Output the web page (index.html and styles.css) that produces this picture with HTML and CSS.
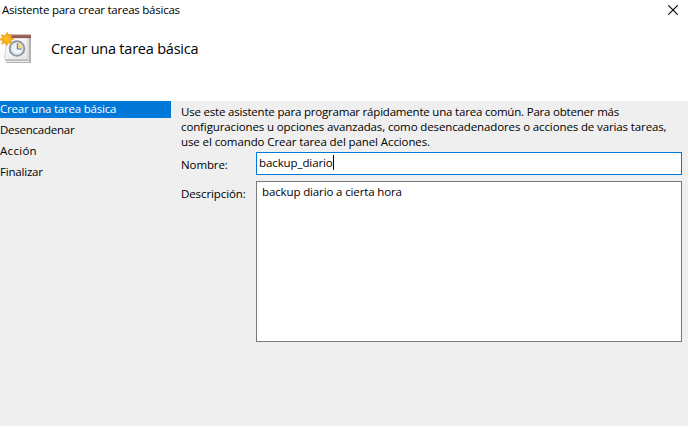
FILE: index.html
```html
<!DOCTYPE html>
<html lang="es">
<head>
<meta charset="utf-8">
<title>Asistente para crear tareas básicas</title>
<link rel="stylesheet" href="styles.css">
</head>
<body>
<div class="wizard">
  <header class="titlebar">
    <span class="caption">Asistente para crear tareas básicas</span>
    <svg class="close" width="10" height="10" viewBox="0 0 10 10"><path d="M0.3 0.3 9.7 9.7M9.7 0.3 0.3 9.7" stroke="#000" stroke-width="1.1"/></svg>
  </header>
  <div class="banner">
    <svg class="icon" width="34" height="34" viewBox="0 0 34 34">
      <defs>
        <linearGradient id="paper" x1="0" y1="0" x2="1" y2="1"><stop offset="0" stop-color="#fff"/><stop offset="1" stop-color="#e4e4e4"/></linearGradient>
        <linearGradient id="binding" x1="0" y1="0" x2="0" y2="1"><stop offset="0" stop-color="#a97767"/><stop offset="1" stop-color="#815348"/></linearGradient>
        <radialGradient id="sun"><stop offset="0" stop-color="#ffc52a"/><stop offset="1" stop-color="#f39a0b"/></radialGradient>
      </defs>
      <path d="M6 3H31V31H6z" fill="#b4b2b1"/>
      <path d="M7 6H29V30H6z" fill="#ededed"/>
      <path d="M6 28.5 4.5 26 7 6H28V28.5z" fill="url(#paper)" stroke="#bcbcbc" stroke-width=".6"/>
      <path d="M5 28H28" stroke="#a3a3a3"/>
      <path d="M7 2.5H31V6H7z" fill="url(#binding)"/>
      <circle cx="17" cy="16.5" r="7.3" fill="#f3f6f8" stroke="#8b989f" stroke-width="1.9"/>
      <circle cx="17" cy="16.5" r="5.7" fill="#eef3f6" stroke="#cbd3d8" stroke-width=".7"/>
      <path d="M17.5 11V16.5H22.5A5.2 5.2 0 0 0 17.5 11z" fill="#f5d487"/>
      <path d="M17.3 11.5V17H21.5" fill="none" stroke="#5e6b73"/>
      <path d="M7.2 0 8.4 3.4 12 2 10.9 5.5 14.3 7 11 8.5 12 12 8.5 10.9 6.9 14 5 11 1.6 12.4 2.6 8.8-1 7.6 2.4 5.7 1 2.4 4.8 3.4z" fill="url(#sun)" stroke="#f2a126" stroke-width=".4"/>
    </svg>
    <h1 class="heading">Crear una tarea básica</h1>
  </div>
  <div class="body">
    <nav class="steps">
      <div class="step current">Crear una tarea básica</div>
      <div class="step s2">Desencadenar</div>
      <div class="step s3">Acción</div>
      <div class="step s4">Finalizar</div>
    </nav>
    <main class="form">
      <div class="intro">
        <div class="l1">Use este asistente para programar rápidamente una tarea común. Para obtener más</div>
        <div class="l2">configuraciones u opciones avanzadas, como desencadenadores o acciones de varias tareas,</div>
        <div class="l3">use el comando Crear tarea del panel Acciones.</div>
      </div>
      <div class="row name-row">
        <span class="label name-label">Nombre:</span>
        <div class="field name"><span class="name-value">backup_diario</span><span class="caret"></span></div>
      </div>
      <div class="row">
        <span class="label desc-label">Descripción:</span>
        <div class="field desc"><span class="desc-value">backup diario a cierta hora</span></div>
      </div>
    </main>
  </div>
</div>
</body>
</html>
```
FILE: styles.css
```css
* { box-sizing: border-box; }
body { margin: 0; background: #fff; color: #000; font: 11.5px/15px "Open Sans", "Noto Sans", sans-serif; white-space: nowrap; }
.wizard { width: 688px; height: 426px; display: flex; flex-direction: column; overflow: hidden; }
.titlebar { height: 30px; display: flex; justify-content: space-between; padding: 2px 10px 0 2px; }
.caption { letter-spacing: -0.24px; }
.close { margin-top: 3px; }
.banner { height: 71px; display: flex; }
.icon { margin: 2px 0 0 0; }
.heading { margin: 9px 0 0 17px; font-size: 14.5px; line-height: 20px; font-weight: 400; letter-spacing: -0.22px; }
.body { flex: 1; display: flex; background: #efefef; }
.steps { width: 171px; display: flex; flex-direction: column; gap: 4px; }
.step { height: 17px; line-height: 15px; letter-spacing: -0.2px; }
.s2 { letter-spacing: -0.24px; }
.s3 { letter-spacing: 0.3px; }
.current { background: #0078d7; color: #fff; }
.form { flex: 1; padding: 3px 6px 0 10px; }
.intro { height: 48px; }
.l1 { letter-spacing: -0.2px; }
.l2 { letter-spacing: -0.12px; }
.l3 { letter-spacing: -0.1px; }
.label, .field { letter-spacing: -0.1px; }
.row { display: flex; }
.name-row { margin-bottom: 6px; }
.label { width: 75px; padding-top: 5px; }
.field { flex: 1; background: #fff; border: 1px solid #7a7a7a; }
.name { height: 23px; border-color: #0078d7; padding: 2px 2px; display: flex; }
.caret { width: 1px; height: 15px; background: #000; }
.desc { height: 161px; padding: 2px 5px; letter-spacing: -0.13px; }
```
